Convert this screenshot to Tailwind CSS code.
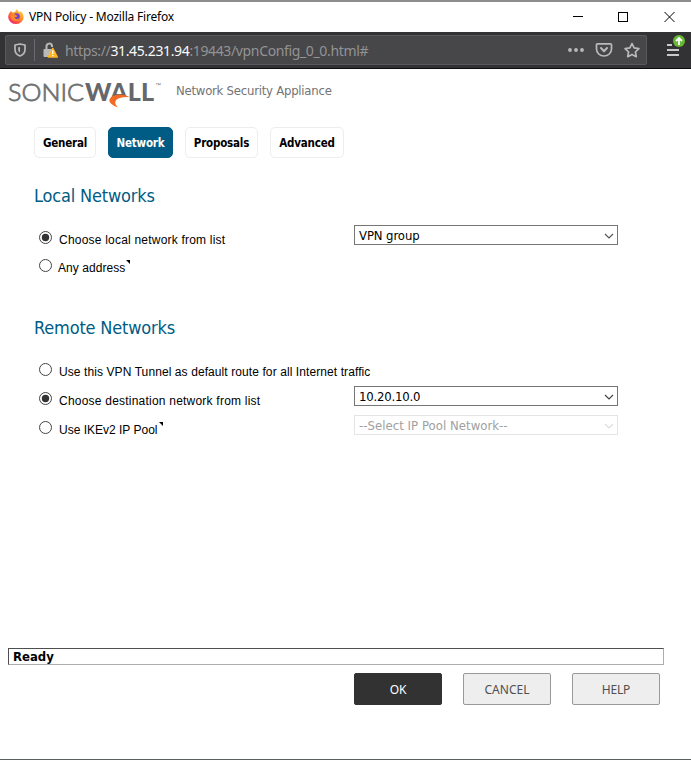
<!DOCTYPE html>
<html lang="en">
<head>
<meta charset="utf-8">
<title>VPN Policy</title>
<script src="https://cdn.jsdelivr.net/npm/@tailwindcss/browser@4"></script>
</head>
<body class="bg-white overflow-hidden">
<div class="w-[691px] h-[760px] flex flex-col border-b border-[#59605c] font-['DejaVu_Sans_Condensed','Noto_Sans',sans-serif] text-black">
  <header class="h-8 shrink-0 border-t-2 border-[#8d8d8d] flex items-center pl-2 bg-white">
    <svg class="w-4 h-4 shrink-0" viewBox="0 0 16 16">
      <defs><linearGradient id="fx" x1="1" y1="0" x2="0.2" y2="1"><stop offset="0" stop-color="#ffe34a"/><stop offset=".45" stop-color="#ff9a2a"/><stop offset=".8" stop-color="#ff4350"/><stop offset="1" stop-color="#e82884"/></linearGradient></defs>
      <path d="M2 3 3 2l1.500 1.500L7 3l2-3c.5 2 1.500 2.500 3 3.500l.5-1.500c2 2 3.200 4 3.200 6.500a7.800 7.400 0 0 1-15.500 0C.2 6.500.8 4.500 2 3z" fill="url(#fx)"/>
      <circle cx="8.500" cy="7.600" r="3.300" fill="#7542c8"/>
      <path d="M2.800 5.500c2-1 4-.5 5.200.6L9.500 7c-.6 1-2 1-3 1.500.7 1.800 3.500 2 5 .5-1 3-5 4.300-7.500 1.800-1.300-1.300-1.700-3.300-1.200-5.300z" fill="#ff8a24"/>
    </svg>
    <h1 class="ml-[5px] text-[12px] leading-4 font-['Noto_Sans',sans-serif] tracking-[-0.2px] whitespace-nowrap">VPN Policy - Mozilla Firefox</h1>
    <svg class="ml-auto mr-4 w-[102px] h-3 shrink-0" viewBox="0 0 102 12" fill="none" stroke="#000" shape-rendering="crispEdges">
      <path d="M0 5.500h10M45.500 1.500h9v9h-9z"/><path d="m91.500 1 10 10m0-10-10 10" shape-rendering="auto"/>
    </svg>
  </header>
  <nav class="h-[37px] shrink-0 bg-[#323234] border-b border-[#0c0c0d] flex items-start pt-[3px] pl-[5px]">
    <div class="w-[642px] h-[30px] shrink-0 rounded-[2px] border border-[#5a5a5c] bg-[#474749] flex items-center">
      <svg class="ml-2 w-3 h-[14px] shrink-0" viewBox="0 0 12 14" fill="none" stroke="#b9b9ba" stroke-width="1.700"><path d="M6 1 11 2v4.500c0 3-2 5.300-5 6.500-3-1.200-5-3.500-5-6.500V2z" stroke-linejoin="round"/><path d="M6 4v5.500C5 9 4.200 8 4.200 6.500V4.200z" fill="#b9b9ba" stroke="none"/></svg>
      <i class="ml-2 w-px h-[22px] bg-[#6a6a70]"></i>
      <svg class="ml-2 w-[15px] h-4 shrink-0" viewBox="0 0 15 16"><path d="M3.500 9V4.200a2.800 2.800 0 0 1 5.500-.5v1.300" fill="none" stroke="#b9b9ba" stroke-width="2"/><rect x="0.500" y="7" width="9" height="8" rx="1" fill="#b9b9ba"/><path d="M9.800 6.300 14.300 15H5.300z" fill="#ffb620" stroke="#ffb620" stroke-linejoin="round" stroke-width="1.400"/><path d="M9.800 8.500v3.500m0 1v1.300" stroke="#fff" stroke-width="1.300"/></svg>
      <p class="ml-[7px] mt-px text-[14px] leading-5 font-['Noto_Sans',sans-serif] text-[#939395] tracking-[-0.36px] whitespace-nowrap">https://<span class="text-[#f9f9fa]">31.45.231.94</span>:19443/vpnConfig_0_0.html#</p>
      <svg class="ml-auto mr-[6px] w-[72px] h-4 shrink-0" viewBox="0 0 72 16" fill="none" stroke="#b9b9ba" stroke-width="1.700" stroke-linejoin="round" stroke-linecap="round"><g fill="#b9b9ba" stroke="none"><circle cx="2" cy="8" r="1.900"/><circle cx="8" cy="8" r="1.900"/><circle cx="14" cy="8" r="1.900"/></g><path d="M29.500 1.800h13q1 0 1 1V7c0 4-3.300 7-7.500 7s-7.500-3-7.500-7V2.800q0-1 1-1z"/><path d="m33 6 3 3.200L39 6" stroke-width="2"/><path d="m64 1.500 2.100 4.400 4.800.7-3.500 3.400.9 4.700-4.300-2.300-4.300 2.300.9-4.700L57.100 6.600l4.800-.7z"/></svg>
    </div>
    <svg class="ml-5 w-[19px] h-[22px] shrink-0" viewBox="0 0 19 22"><path d="M0 10h5M0 15h12M0 20h12" stroke="#c8c8c9" stroke-width="2" fill="none"/><circle cx="12" cy="6" r="6" fill="#67b832"/><path d="M12 10V3M9 6l3-3 3 3" fill="none" stroke="#fff" stroke-width="1.800"/></svg>
  </nav>
  <main class="flex flex-col grow">
    <div class="h-[58px] shrink-0 flex items-start pl-2 pt-[7px]">
      <svg class="w-[154px] h-[34px] shrink-0" viewBox="0 -4 154 34">
        <g font-family="Lato" font-size="24"><text x="0" y="21" textLength="76" lengthAdjust="spacingAndGlyphs" font-weight="300" stroke="#717173" stroke-width=".8" fill="#717173">SONIC</text>
        <text x="77" y="21" textLength="69" lengthAdjust="spacingAndGlyphs" font-weight="900" fill="#66676a">WALL</text></g>
        <path d="M105 18.500c5-2.500 9-3 14-2l2.500 6H105z" fill="#fff"/>
        <path d="M121.500 17c-5-3-12-3.500-16.500-1-4.500 2.500-4.500 5.500-1.500 8 1.700 1.400 4 2.500 6.500 3.500-2.500-3-4-5.200-1.500-7.800 2.500-2.300 7-3 13-2.700z" fill="#f26a24"/>
        <text x="147" y="7" font-family="Liberation Sans" font-size="6" fill="#777">™</text>
      </svg>
      <p class="ml-[14px] mt-[5px] text-[13px] leading-5 tracking-[-0.24px] text-[#737373] whitespace-nowrap">Network Security Appliance</p>
    </div>
    <div class="h-[31px] shrink-0 pl-[34px] flex gap-3 text-[11.5px] tracking-[-0.2px] font-bold text-center leading-[31px] whitespace-nowrap">
      <a class="w-[62px] rounded-[5px] border border-[#ededed]"><span>General</span></a>
      <a class="w-[65px] rounded-[5px] border border-[#005c84] bg-[#005c84] text-white"><span>Network</span></a>
      <a class="w-[73px] rounded-[5px] border border-[#ededed]"><span>Proposals</span></a>
      <a class="w-[74px] rounded-[5px] border border-[#ededed]"><span>Advanced</span></a>
    </div>
    <section class="h-[132px] shrink-0 pl-[34px] pt-[26px]">
      <h2 class="text-[18px] leading-6 tracking-[-0.17px] text-[#005c84] whitespace-nowrap"><span>Local Networks</span></h2>
      <div class="mt-[17px] h-5 flex">
        <label class="w-[320px] pl-[5px] flex items-start text-[12px] leading-5 font-['Liberation_Sans',sans-serif]">
          <svg class="mt-[6px] w-[13px] h-[13px]" viewBox="0 0 13 13"><circle cx="6.500" cy="6.500" r="6" fill="#fff" stroke="#444"/><circle cx="6.500" cy="6.500" r="3.700" fill="#333"/></svg>
          <span class="ml-[7px] mt-[5px] tracking-[0.21px] whitespace-nowrap">Choose local network from list</span>
        </label>
        <div class="w-[264px] h-5 border border-[#767676] pl-1 pr-[3px] pt-[2px] flex items-center justify-between text-[13px] leading-4"><span class="tracking-[-0.1px]">VPN group</span><svg class="w-[10px] h-[6px]" viewBox="0 0 10 6"><path d="m1 1 4 4 4-4" fill="none" stroke="#555" stroke-width="1.200"/></svg></div>
      </div>
      <label class="mt-[14px] pl-[5px] flex items-start text-[12px] leading-5 font-['Liberation_Sans',sans-serif]">
        <svg class="w-[13px] h-[13px]" viewBox="0 0 13 13"><circle cx="6.500" cy="6.500" r="6" fill="#fff" stroke="#444"/></svg>
        <span class="ml-[6px] -mt-px tracking-[0.05px] whitespace-nowrap">Any address</span>
        <svg class="ml-[1px] mt-[1px] w-1 h-1" viewBox="0 0 4 4"><path d="M0 0h4v4z"/></svg>
      </label>
    </section>
    <section class="h-[358px] shrink-0 pl-[34px] pt-[26px]">
      <h2 class="text-[18px] leading-6 tracking-[-0.17px] text-[#005c84] whitespace-nowrap"><span>Remote Networks</span></h2>
      <label class="mt-[23px] h-5 pl-[5px] flex items-start text-[12px] leading-5 font-['Liberation_Sans',sans-serif]">
        <svg class="w-[13px] h-[13px]" viewBox="0 0 13 13"><circle cx="6.500" cy="6.500" r="6" fill="#fff" stroke="#444"/></svg>
        <span class="ml-[7px] -mt-px tracking-[0.09px] whitespace-nowrap">Use this VPN Tunnel as default route for all Internet traffic</span>
      </label>
      <div class="mt-[3px] h-5 flex">
        <label class="w-[320px] pl-[5px] flex items-start text-[12px] leading-5 font-['Liberation_Sans',sans-serif]">
          <svg class="mt-[6px] w-[13px] h-[13px]" viewBox="0 0 13 13"><circle cx="6.500" cy="6.500" r="6" fill="#fff" stroke="#444"/><circle cx="6.500" cy="6.500" r="3.700" fill="#333"/></svg>
          <span class="ml-[7px] mt-[5px] tracking-[0.22px] whitespace-nowrap">Choose destination network from list</span>
        </label>
        <div class="w-[264px] h-5 border border-[#767676] pl-1 pr-[3px] pt-[2px] flex items-center justify-between text-[13px] leading-4"><span class="tracking-[-0.2px]">10.20.10.0</span><svg class="w-[10px] h-[6px]" viewBox="0 0 10 6"><path d="m1 1 4 4 4-4" fill="none" stroke="#444" stroke-width="1.200"/></svg></div>
      </div>
      <div class="mt-[9px] h-5 flex">
        <label class="w-[320px] pl-[5px] flex items-start text-[12px] leading-5 font-['Liberation_Sans',sans-serif]">
          <svg class="mt-[6px] w-[13px] h-[13px]" viewBox="0 0 13 13"><circle cx="6.500" cy="6.500" r="6" fill="#fff" stroke="#444"/></svg>
          <span class="ml-[7px] mt-[5px] whitespace-nowrap">Use IKEv2 IP Pool</span>
          <svg class="ml-[1px] mt-[7px] w-1 h-1" viewBox="0 0 4 4"><path d="M0 0h4v4z"/></svg>
        </label>
        <div class="w-[264px] h-5 border border-[#e4e4e4] pl-1 pr-[3px] pt-[2px] flex items-center justify-between text-[13px] leading-4 text-[#a0a0a0]"><span class="tracking-[0.04px]">--Select IP Pool Network--</span><svg class="w-[10px] h-[6px]" viewBox="0 0 10 6"><path d="m1 1 4 4 4-4" fill="none" stroke="#ddd" stroke-width="1.200"/></svg></div>
      </div>
    </section>
    <footer class="pl-2">
      <div class="w-[656px] h-[17px] border border-t-[#4f4f4f] border-l-[#4f4f4f] border-r-[#adadad] border-b-[#adadad] pl-1 text-[13px] leading-[15px] font-bold"><span>Ready</span></div>
      <div class="mt-2 ml-[346px] h-8 flex gap-[21px] text-[12px] text-center font-['Noto_Sans',sans-serif] text-[#505050]">
        <button class="w-[88px] rounded-[2px] border border-[#323232] bg-[#323232] text-white leading-[32px] tracking-[-0.2px]"><span>OK</span></button>
        <button class="w-[88px] rounded-[2px] border border-[#999] bg-[#eee] leading-[32px]"><span>CANCEL</span></button>
        <button class="w-[88px] rounded-[2px] border border-[#999] bg-[#eee] leading-[32px] tracking-[-0.2px]"><span>HELP</span></button>
      </div>
    </footer>
  </main>
</div>
</body>
</html>
